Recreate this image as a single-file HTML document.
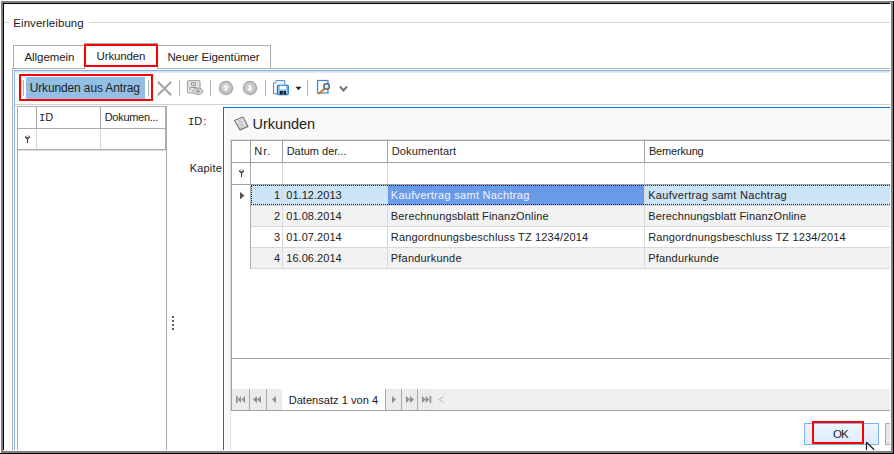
<!DOCTYPE html>
<html><head><meta charset="utf-8">
<style>
html,body{margin:0;padding:0;width:894px;height:454px;overflow:hidden;background:#fff;}
body{position:relative;font-family:"Liberation Sans",sans-serif;color:#222;}
.a{position:absolute;}
.t{position:absolute;white-space:nowrap;line-height:1;}
</style></head><body>
<div class="a" style="left:4px;top:22px;width:5px;height:1px;background:#d5d5d5;"></div>
<div class="a" style="left:89px;top:22px;width:801px;height:1px;background:#d5d5d5;"></div>
<div class="t" style="left:13.30px;top:18px;font-size:11.5px;color:#222;letter-spacing:0.059px;">Einverleibung</div>
<div class="a" style="left:13px;top:45px;width:72px;height:24px;box-sizing:border-box;border:1px solid #acacac;border-bottom:none;background:#fff;"></div>
<div class="t" style="left:24.50px;top:52px;font-size:11.5px;color:#222;letter-spacing:-0.075px;">Allgemein</div>
<div class="a" style="left:157px;top:45px;width:114px;height:24px;box-sizing:border-box;border:1px solid #acacac;border-bottom:none;background:#fff;"></div>
<div class="t" style="left:167.40px;top:52px;font-size:11.5px;color:#222;letter-spacing:-0.073px;">Neuer Eigentümer</div>
<div class="a" style="left:12px;top:68px;width:73px;height:1px;background:#acacac;"></div>
<div class="a" style="left:157px;top:68px;width:733px;height:1px;background:#acacac;"></div>
<div class="a" style="left:84px;top:43px;width:74px;height:26px;box-sizing:border-box;border:1px solid #acacac;border-bottom:none;background:#fff;"></div>
<div class="t" style="left:96.60px;top:51px;font-size:11.5px;color:#222;letter-spacing:-0.167px;">Urkunden</div>
<div class="a" style="left:12px;top:68px;width:1px;height:382px;background:#acacac;"></div>
<div class="a" style="left:14px;top:70px;width:1px;height:380px;background:#7eb4ea;"></div>
<div class="a" style="left:14px;top:70px;width:876px;height:1px;background:#7fb2e9;"></div>
<div class="a" style="left:15px;top:71px;width:875px;height:1px;background:#cde2f6;"></div>
<div class="a" style="left:15px;top:72px;width:875px;height:1px;background:#dfecf9;"></div>
<div class="a" style="left:15px;top:104px;width:875px;height:1px;background:#d0d0d0;"></div>
<div class="a" style="left:21px;top:80px;width:1px;height:16px;background:#d3d9d9;"></div>
<div class="a" style="left:23px;top:80px;width:1px;height:16px;background:#b2b2b2;"></div>
<div class="a" style="left:26px;top:77px;width:119px;height:22px;background:#92bfe3;"></div>
<div class="t" style="left:29.70px;top:82px;font-size:12px;color:#222;letter-spacing:-0.135px;">Urkunden aus Antrag</div>
<div class="a" style="left:148px;top:80px;width:1px;height:16px;background:#b4b4b4;"></div>
<div class="a" style="left:17px;top:106px;width:150px;height:344px;box-sizing:border-box;border:1px solid #acacac;border-bottom:none;background:#fff;"></div>
<div class="a" style="left:36px;top:107px;width:1px;height:21px;background:#acacac;"></div>
<div class="a" style="left:36px;top:129px;width:1px;height:20px;background:#d9d9d9;"></div>
<div class="a" style="left:100px;top:107px;width:1px;height:21px;background:#acacac;"></div>
<div class="a" style="left:100px;top:129px;width:1px;height:20px;background:#d9d9d9;"></div>
<div class="a" style="left:165px;top:107px;width:1px;height:42px;background:#acacac;"></div>
<div class="a" style="left:18px;top:128px;width:148px;height:1px;background:#acacac;"></div>
<div class="a" style="left:18px;top:149px;width:149px;height:1px;background:#acacac;"></div>
<div class="a" style="left:18px;top:150px;width:148px;height:1px;background:#dcdcdc;"></div>
<div class="t" style="left:39px;top:112px;font-size:11px;color:#222"><span style="font-family:Liberation Mono;font-size:10.5px;letter-spacing:-0.6px">I</span><span style="margin-left:0.5px">D</span></div>
<div class="t" style="left:104.70px;top:112px;font-size:11px;color:#222;letter-spacing:-0.288px;">Dokumen...</div>
<svg class="a" style="left:24px;top:135px" width="8" height="9" viewBox="0 0 8 9"><path d="M1 1.9C1 0.4 6 0.4 6 1.9V2.6L4.1 4.6H2.9L1 2.6Z" fill="#4a4a4a"/><ellipse cx="3.5" cy="1.7" rx="1.6" ry="0.6" fill="#f0f0f0"/><rect x="3" y="4.3" width="1" height="3.7" fill="#3a3a3a"/></svg>
<div class="a" style="left:172px;top:316px;width:2px;height:2px;background:#606060;"></div>
<div class="a" style="left:172px;top:320px;width:2px;height:2px;background:#606060;"></div>
<div class="a" style="left:172px;top:324px;width:2px;height:2px;background:#606060;"></div>
<div class="a" style="left:172px;top:328px;width:2px;height:2px;background:#606060;"></div>
<svg class="a" style="left:156px;top:80px" width="17" height="17" viewBox="0 0 17 17"><path d="M2.5 2.5L14.5 14.5M14.5 2.5L2.5 14.5" stroke="#a6a6a6" stroke-width="2.2" stroke-linecap="round"/></svg>
<div class="a" style="left:179px;top:80px;width:1px;height:16px;background:#b4b4b4;"></div>
<svg class="a" style="left:186px;top:79px" width="18" height="17" viewBox="0 0 18 17"><rect x="1.5" y="1.5" width="12.5" height="12.5" rx="1.5" fill="#e2e2e2" stroke="#a8a8a8" stroke-width="1.2"/><rect x="5.5" y="3.5" width="4" height="2.5" fill="#e2e2e2" stroke="#9a9a9a" stroke-width="1"/><path d="M7.5 6v2.5M4 11V8.5h7" fill="none" stroke="#9a9a9a" stroke-width="1"/><ellipse cx="12" cy="12.3" rx="5" ry="3.2" fill="#d4d4d4" stroke="#a0a0a0" stroke-width="1"/><ellipse cx="12" cy="12.3" rx="1.8" ry="1.8" fill="#a8a8a8"/></svg>
<div class="a" style="left:210px;top:80px;width:1px;height:16px;background:#b4b4b4;"></div>
<svg class="a" style="left:218px;top:80px" width="16" height="16" viewBox="0 0 16 16"><defs><radialGradient id="cg" cx="0.45" cy="0.4" r="0.6"><stop offset="0" stop-color="#d6d6d6"/><stop offset="1" stop-color="#bcbcbc"/></radialGradient></defs><circle cx="8" cy="8" r="6.6" fill="url(#cg)" stroke="#a6a6a6" stroke-width="1.2"/><path d="M8 4.2L11.2 7.6H9.2V11H6.8V7.6H4.8Z" fill="#f6f6f6"/></svg>
<svg class="a" style="left:242px;top:80px" width="16" height="16" viewBox="0 0 16 16"><defs><radialGradient id="cg2" cx="0.45" cy="0.4" r="0.6"><stop offset="0" stop-color="#d6d6d6"/><stop offset="1" stop-color="#bcbcbc"/></radialGradient></defs><circle cx="8" cy="8" r="6.6" fill="url(#cg2)" stroke="#a6a6a6" stroke-width="1.2"/><path d="M8 11.8L11.2 8.4H9.2V5H6.8V8.4H4.8Z" fill="#f6f6f6"/></svg>
<div class="a" style="left:265px;top:80px;width:1px;height:16px;background:#b4b4b4;"></div>
<svg class="a" style="left:272px;top:79px" width="18" height="17" viewBox="0 0 18 17"><defs><linearGradient id="dg" x1="0" y1="0" x2="1" y2="1"><stop offset="0" stop-color="#ffffff"/><stop offset="1" stop-color="#cfe0f4"/></linearGradient></defs><path d="M4 1.5H12.8V14.8H1.5V4Z" fill="url(#dg)" stroke="#4d8fd8" stroke-width="1"/><path d="M1.5 4H4V1.5" fill="#fff" stroke="#4d8fd8" stroke-width="0.8"/><rect x="5.5" y="6.3" width="10.8" height="9.3" rx="0.8" fill="#8fc0ef" stroke="#2f7bd3" stroke-width="1.2"/><rect x="7.8" y="6.8" width="6.2" height="3.5" fill="#ffffff"/><rect x="7.8" y="12" width="6.2" height="3.4" fill="#1e1e1e"/><rect x="10.6" y="12.6" width="1.4" height="2.2" fill="#5aa0e6"/></svg>
<svg class="a" style="left:295px;top:86px" width="7" height="5" viewBox="0 0 7 5"><path d="M0.5 0.8H6.5L3.5 4.2Z" fill="#222"/></svg>
<div class="a" style="left:307px;top:80px;width:1px;height:16px;background:#b4b4b4;"></div>
<svg class="a" style="left:316px;top:79px" width="16" height="17" viewBox="0 0 16 17"><rect x="1.5" y="1.5" width="10.5" height="12.5" fill="#f6f9fe" stroke="#3f82d6" stroke-width="1.2"/><path d="M8.4 9.8L3 14.5" stroke="#c9822f" stroke-width="2.2" stroke-linecap="round"/><circle cx="10.6" cy="7.4" r="2.8" fill="#cfe9f7" stroke="#4a4a4a" stroke-width="1.2"/></svg>
<svg class="a" style="left:339px;top:85px" width="9" height="8" viewBox="0 0 9 8"><path d="M1 1.5L4.5 5.5L8 1.5" fill="none" stroke="#737373" stroke-width="2"/></svg>
<div class="t" style="left:188px;top:116px;font-size:11px;color:#222"><span style="font-family:Liberation Mono;font-size:10.5px;letter-spacing:-0.6px">I</span><span style="margin-left:0.5px;letter-spacing:1.2px">D:</span></div>
<div class="t" style="left:189.70px;top:163px;font-size:11px;color:#222;letter-spacing:0.186px;">Kapite</div>
<div class="a" style="left:223px;top:107px;width:671px;height:343px;box-sizing:border-box;border-left:1px solid #0c6fcc;border-top:1px solid #0c6fcc;background:#f9f9f9;"></div>
<div class="a" style="left:224px;top:108px;width:666px;height:1px;background:#fff;"></div>
<div class="a" style="left:224px;top:108px;width:1px;height:342px;background:#fff;"></div>
<div class="t" style="left:252.50px;top:117px;font-size:14.5px;color:#222;letter-spacing:-0.044px;">Urkunden</div>
<svg class="a" style="left:230px;top:112px" width="24" height="22" viewBox="0 0 24 22"><defs><linearGradient id="ig" x1="0" y1="0" x2="0.3" y2="1"><stop offset="0.35" stop-color="#fafafa"/><stop offset="1" stop-color="#c4c4c4"/></linearGradient></defs><path d="M4.5 8.5L13 5L18 14.5L10 18Z" fill="url(#ig)" stroke="#707070" stroke-width="1.1" stroke-linejoin="round"/><path d="M7 9.5L12.5 7.3M8 11.3L13.5 9.1M9 13.1L12.5 11.7" stroke="#9a9a9a" stroke-width="0.8"/></svg>
<div class="a" style="left:230px;top:139px;width:660px;height:1px;background:#dedede;"></div>
<div class="a" style="left:230px;top:139px;width:1px;height:311px;background:#dedede;"></div>
<div class="a" style="left:231px;top:140px;width:659px;height:1px;background:#a0a0a0;"></div>
<div class="a" style="left:231px;top:140px;width:1px;height:271px;background:#a0a0a0;"></div>
<div class="a" style="left:232px;top:141px;width:658px;height:217px;background:#fff;"></div>
<div class="a" style="left:250px;top:141px;width:1px;height:21px;background:#a0a0a0;"></div>
<div class="a" style="left:282px;top:141px;width:1px;height:21px;background:#a0a0a0;"></div>
<div class="a" style="left:387px;top:141px;width:1px;height:21px;background:#a0a0a0;"></div>
<div class="a" style="left:644px;top:141px;width:1px;height:21px;background:#a0a0a0;"></div>
<div class="a" style="left:232px;top:162px;width:658px;height:1px;background:#a0a0a0;"></div>
<div class="t" style="left:254.30px;top:146px;font-size:11px;color:#222;letter-spacing:1.000px;">Nr.</div>
<div class="t" style="left:286.70px;top:146px;font-size:11px;color:#222;letter-spacing:-0.014px;">Datum der...</div>
<div class="t" style="left:391.70px;top:146px;font-size:11px;color:#222;letter-spacing:0.139px;">Dokumentart</div>
<div class="t" style="left:648.90px;top:146px;font-size:11px;color:#222;letter-spacing:-0.179px;">Bemerkung</div>
<div class="a" style="left:250px;top:163px;width:1px;height:21px;background:#a8a8a8;"></div>
<div class="a" style="left:282px;top:163px;width:1px;height:21px;background:#d9d9d9;"></div>
<div class="a" style="left:387px;top:163px;width:1px;height:21px;background:#d9d9d9;"></div>
<div class="a" style="left:644px;top:163px;width:1px;height:21px;background:#d9d9d9;"></div>
<div class="a" style="left:232px;top:184px;width:658px;height:1px;background:#a0a0a0;"></div>
<svg class="a" style="left:238px;top:169px" width="8" height="9" viewBox="0 0 8 9"><path d="M1 1.9C1 0.4 6 0.4 6 1.9V2.6L4.1 4.6H2.9L1 2.6Z" fill="#4a4a4a"/><ellipse cx="3.5" cy="1.7" rx="1.6" ry="0.6" fill="#f0f0f0"/><rect x="3" y="4.3" width="1" height="3.7" fill="#3a3a3a"/></svg>
<div class="a" style="left:251px;top:185px;width:639px;height:20px;background:#cce4f7;"></div>
<div class="a" style="left:388px;top:185px;width:256px;height:20px;background:#6a9be8;"></div>
<div class="a" style="left:250px;top:185px;width:1px;height:21px;background:#d9d9d9;"></div>
<div class="a" style="left:282px;top:185px;width:1px;height:21px;background:#d9d9d9;"></div>
<div class="a" style="left:387px;top:185px;width:1px;height:21px;background:#d9d9d9;"></div>
<div class="a" style="left:644px;top:185px;width:1px;height:21px;background:#d9d9d9;"></div>
<div class="a" style="left:251px;top:205px;width:639px;height:1px;background:#d9d9d9;"></div>
<div class="t" style="left:274.10px;top:190px;font-size:11px;color:#222;letter-spacing:0.000px;">1</div>
<div class="t" style="left:286.30px;top:190px;font-size:11px;color:#222;letter-spacing:0.040px;">01.12.2013</div>
<div class="t" style="left:390.80px;top:190px;font-size:11px;color:#f4f6ff;letter-spacing:0.295px;">Kaufvertrag samt Nachtrag</div>
<div class="t" style="left:648.20px;top:190px;font-size:11px;color:#222;letter-spacing:0.295px;">Kaufvertrag samt Nachtrag</div>
<div class="a" style="left:251px;top:206px;width:639px;height:20px;background:#f2f2f2;"></div>
<div class="a" style="left:250px;top:206px;width:1px;height:21px;background:#d9d9d9;"></div>
<div class="a" style="left:282px;top:206px;width:1px;height:21px;background:#d9d9d9;"></div>
<div class="a" style="left:387px;top:206px;width:1px;height:21px;background:#d9d9d9;"></div>
<div class="a" style="left:644px;top:206px;width:1px;height:21px;background:#d9d9d9;"></div>
<div class="a" style="left:251px;top:226px;width:639px;height:1px;background:#d9d9d9;"></div>
<div class="t" style="left:274.10px;top:211px;font-size:11px;color:#222;letter-spacing:0.000px;">2</div>
<div class="t" style="left:286.30px;top:211px;font-size:11px;color:#222;letter-spacing:0.040px;">01.08.2014</div>
<div class="t" style="left:390.80px;top:211px;font-size:11px;color:#222;letter-spacing:0.155px;">Berechnungsblatt FinanzOnline</div>
<div class="t" style="left:648.20px;top:211px;font-size:11px;color:#222;letter-spacing:0.155px;">Berechnungsblatt FinanzOnline</div>
<div class="a" style="left:250px;top:227px;width:1px;height:21px;background:#d9d9d9;"></div>
<div class="a" style="left:282px;top:227px;width:1px;height:21px;background:#d9d9d9;"></div>
<div class="a" style="left:387px;top:227px;width:1px;height:21px;background:#d9d9d9;"></div>
<div class="a" style="left:644px;top:227px;width:1px;height:21px;background:#d9d9d9;"></div>
<div class="a" style="left:251px;top:247px;width:639px;height:1px;background:#d9d9d9;"></div>
<div class="t" style="left:274.10px;top:232px;font-size:11px;color:#222;letter-spacing:0.000px;">3</div>
<div class="t" style="left:286.30px;top:232px;font-size:11px;color:#222;letter-spacing:0.040px;">01.07.2014</div>
<div class="t" style="left:390.80px;top:232px;font-size:11px;color:#222;letter-spacing:0.151px;">Rangordnungsbeschluss TZ 1234/2014</div>
<div class="t" style="left:648.20px;top:232px;font-size:11px;color:#222;letter-spacing:0.151px;">Rangordnungsbeschluss TZ 1234/2014</div>
<div class="a" style="left:251px;top:248px;width:639px;height:20px;background:#f2f2f2;"></div>
<div class="a" style="left:250px;top:248px;width:1px;height:21px;background:#d9d9d9;"></div>
<div class="a" style="left:282px;top:248px;width:1px;height:21px;background:#d9d9d9;"></div>
<div class="a" style="left:387px;top:248px;width:1px;height:21px;background:#d9d9d9;"></div>
<div class="a" style="left:644px;top:248px;width:1px;height:21px;background:#d9d9d9;"></div>
<div class="a" style="left:251px;top:268px;width:639px;height:1px;background:#d9d9d9;"></div>
<div class="t" style="left:274.10px;top:253px;font-size:11px;color:#222;letter-spacing:0.000px;">4</div>
<div class="t" style="left:286.30px;top:253px;font-size:11px;color:#222;letter-spacing:0.040px;">16.06.2014</div>
<div class="t" style="left:390.80px;top:253px;font-size:11px;color:#222;letter-spacing:0.202px;">Pfandurkunde</div>
<div class="t" style="left:648.20px;top:253px;font-size:11px;color:#222;letter-spacing:0.202px;">Pfandurkunde</div>
<div class="a" style="left:251px;top:185px;width:639px;height:20px;box-sizing:border-box;border:1px dotted #222;border-right:none;"></div>
<div class="a" style="left:250px;top:185px;width:1px;height:84px;background:#b0b0b0;"></div>
<svg class="a" style="left:240px;top:192px" width="5" height="8" viewBox="0 0 5 8"><path d="M0 0L4.5 3.5L0 7.5Z" fill="#555"/></svg>
<div class="a" style="left:231px;top:358px;width:659px;height:1px;background:#a0a0a0;"></div>
<div class="a" style="left:232px;top:359px;width:658px;height:30px;background:#fff;"></div>
<div class="a" style="left:231px;top:411px;width:659px;height:39px;background:#fff;"></div>
<div class="a" style="left:232px;top:389px;width:658px;height:21px;background:#efefef;"></div>
<div class="a" style="left:232px;top:389px;width:50px;height:21px;background:#ebebeb;"></div>
<div class="a" style="left:386px;top:389px;width:47px;height:21px;background:#ebebeb;"></div>
<div class="a" style="left:282px;top:389px;width:103px;height:21px;background:#fff;"></div>
<div class="a" style="left:231px;top:410px;width:659px;height:1px;background:#a0a0a0;"></div>
<div class="a" style="left:249px;top:389px;width:1px;height:21px;background:#a8a8a8;"></div>
<div class="a" style="left:266px;top:389px;width:1px;height:21px;background:#a8a8a8;"></div>
<div class="a" style="left:385px;top:389px;width:1px;height:21px;background:#a8a8a8;"></div>
<div class="a" style="left:401px;top:389px;width:1px;height:21px;background:#a8a8a8;"></div>
<div class="a" style="left:417px;top:389px;width:1px;height:21px;background:#a8a8a8;"></div>
<div class="t" style="left:288.70px;top:395px;font-size:11px;color:#222;letter-spacing:0.041px;">Datensatz 1 von 4</div>
<svg class="a" style="left:235px;top:396px" width="11" height="8"><rect x="1" y="0" width="1.6" height="7" fill="#8e8e8e"/><path d="M6 0V7L2.6 3.5Z M10 0V7L6.6 3.5Z" fill="#8e8e8e"/></svg>
<svg class="a" style="left:253px;top:396px" width="9" height="8"><path d="M4 0V7L0 3.5Z M8 0V7L4 3.5Z" fill="#8e8e8e"/></svg>
<svg class="a" style="left:272px;top:396px" width="5" height="8"><path d="M4 0V7L0 3.5Z" fill="#8e8e8e"/></svg>
<svg class="a" style="left:392px;top:396px" width="5" height="8"><path d="M0 0V7L4 3.5Z" fill="#8e8e8e"/></svg>
<svg class="a" style="left:406px;top:396px" width="9" height="8"><path d="M0 0V7L4 3.5Z M4 0V7L8 3.5Z" fill="#8e8e8e"/></svg>
<svg class="a" style="left:422px;top:396px" width="10" height="8"><path d="M0 0V7L3.6 3.5Z M3.6 0V7L7.2 3.5Z" fill="#8e8e8e"/><rect x="7.6" y="0" width="1.6" height="7" fill="#8e8e8e"/></svg>
<svg class="a" style="left:438px;top:396px" width="7" height="8"><path d="M5.5 0.5L1 3.5L5.5 6.5" fill="none" stroke="#c8c8c8" stroke-width="1.2"/></svg>
<div class="a" style="left:804px;top:423px;width:75px;height:22px;box-sizing:border-box;border:1px solid #7eb4ea;background:linear-gradient(#edf5fd,#dcebfb);"></div>
<div class="t" style="left:833.00px;top:429px;font-size:11.5px;color:#222;letter-spacing:-0.945px;">OK</div>
<div class="a" style="left:885px;top:423px;width:10px;height:22px;box-sizing:border-box;border:1px solid #adadad;background:#e6e6e6;"></div>
<svg class="a" style="left:864px;top:440px" width="14" height="12" viewBox="0 0 14 12"><path d="M2.5 2V11L4.5 9.5L6 12H9L7.5 9H10.5Z" fill="#fff"/><path d="M2.5 2V11M2.5 2.2L10.2 9.8" fill="none" stroke="#1b1b2b" stroke-width="1.2"/></svg>
<div class="a" style="left:84px;top:44px;width:74px;height:23px;box-sizing:border-box;border:2px solid #f00;"></div>
<div class="a" style="left:19px;top:74px;width:134px;height:27px;box-sizing:border-box;border:2px solid #f00;"></div>
<div class="a" style="left:812px;top:421px;width:52px;height:23px;box-sizing:border-box;border:2px solid #f00;"></div>
<div class="a" style="left:890px;top:4px;width:4px;height:447px;background:#fff;"></div>
<div class="a" style="left:4px;top:450px;width:890px;height:4px;background:#fff;"></div>
<div class="a" style="left:1px;top:1px;width:892px;height:452px;box-sizing:border-box;border:2px solid #808080;"></div>
<div class="a" style="left:893px;top:1px;width:1px;height:453px;background:#000;"></div>
<div class="a" style="left:0px;top:453px;width:894px;height:1px;background:#000;"></div>
<div class="a" style="left:3px;top:3px;width:887px;height:1px;background:#000;"></div>
<div class="a" style="left:3px;top:3px;width:1px;height:447px;background:#000;"></div>
</body></html>
